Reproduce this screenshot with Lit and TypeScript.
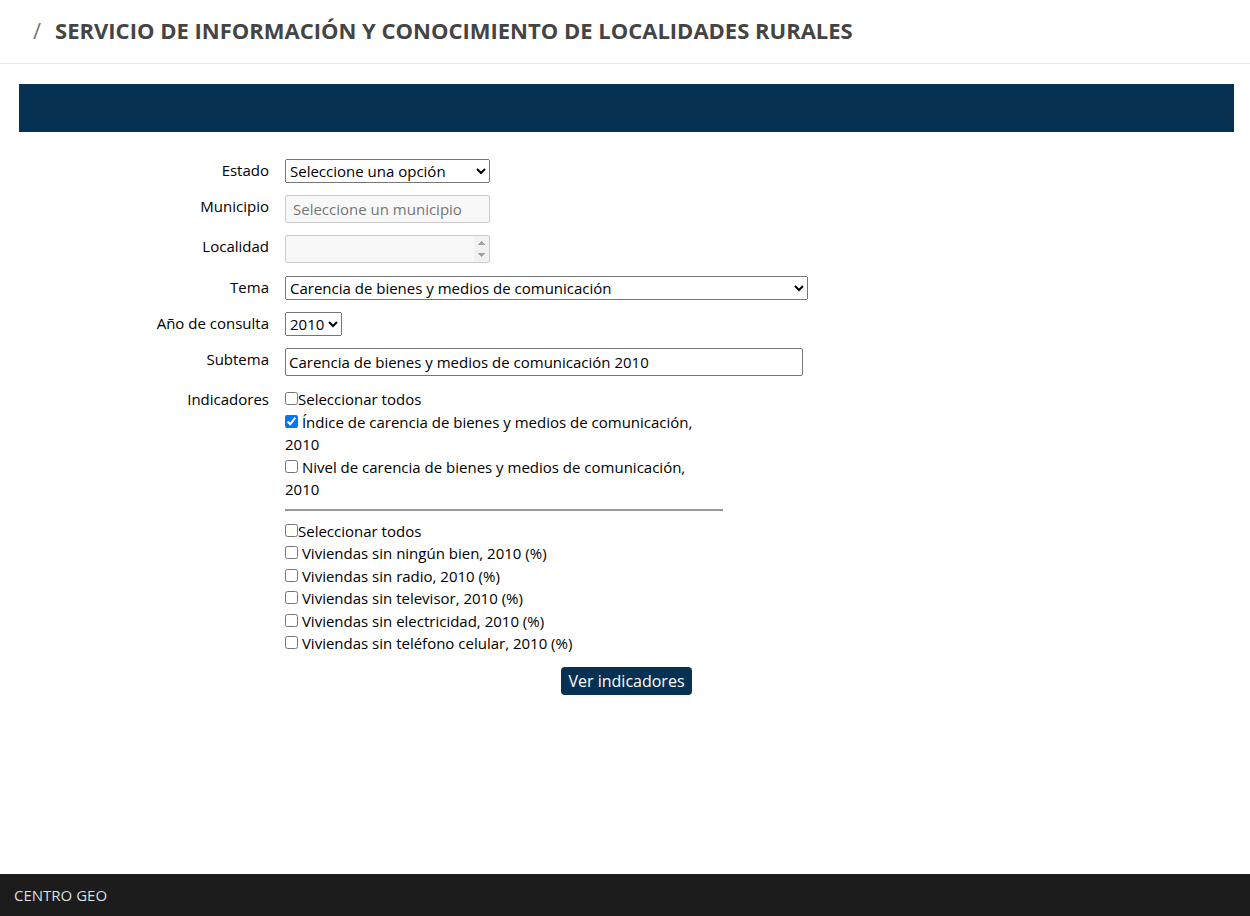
import { LitElement, html, css } from "lit";
import { customElement, state } from "lit/decorators.js";

interface Indicator {
  id: string;
  label: string;
  checked: boolean;
}

@customElement("app-root")
export class AppRoot extends LitElement {
  static styles = css`
    :host {
      display: flex;
      flex-direction: column;
      min-height: 100vh;
      background: #fff;
      color: #000;
      font-family: "Open Sans", sans-serif;
      font-size: 15px;
      line-height: 1.5;
    }
    *,
    *::before {
      box-sizing: border-box;
    }
    .header {
      display: flex;
      align-items: center;
      gap: 14px;
      padding: 15px 33px 18px;
      border-bottom: 1px solid #e7e7e7;
    }
    .slash,
    .title {
      margin: 0;
      font-size: 22px;
      line-height: 30px;
    }
    .slash {
      color: #777;
    }
    .title {
      color: #444;
      font-weight: 700;
    }
    .main {
      flex: 1;
      padding: 20px 16px 20px 19px;
    }
    .banner {
      height: 48px;
      background: #063152;
    }
    .form {
      display: grid;
      grid-template-columns: 250px minmax(0, 1fr);
      column-gap: 16px;
      row-gap: 12px;
      align-items: start;
      justify-items: start;
      margin-top: 27px;
    }
    .label {
      justify-self: end;
      line-height: 22px;
    }
    select,
    input,
    button {
      font: inherit;
      margin: 0;
    }
    .control {
      display: block;
      max-width: 100%;
      height: 28px;
    }
    .drop {
      height: 24px;
    }
    .small {
      width: 205px;
    }
    .place {
      padding: 1px 7px;
      border: 1px solid #ccc;
      border-radius: 2px;
      background: #f8f8f8;
    }
    .theme {
      width: 523px;
    }
    .subtheme {
      width: 518px;
      padding: 1px 3px;
      border: 1px solid #767676;
      border-radius: 2px;
    }
    .listbox {
      position: relative;
      max-width: 100%;
      padding-bottom: 1px;
    }
    .list {
      border: 1px solid #ccc;
      border-radius: 2px;
      background: #f8f8f8;
      opacity: 1;
      scrollbar-width: none;
    }
    .scroller {
      position: absolute;
      top: 1px;
      right: 1px;
      width: 15px;
      height: 26px;
      background: #f1f1f1;
      pointer-events: none;
    }
    .indicators {
      width: 438px;
      max-width: 100%;
    }
    .item {
      display: block;
    }
    .rule {
      height: 2px;
      margin: 8px 0 9px;
      border: 0;
      background: #999;
    }
    .actions {
      margin-top: 12px;
      text-align: center;
    }
    .submit {
      height: 28px;
      padding: 0 7px;
      border: 0;
      border-radius: 4px;
      background: #063152;
      color: #fff;
      font-size: 16px;
      line-height: 28px;
      vertical-align: top;
    }
    .footer {
      padding: 10px 14px;
      background: #1c1c1c;
      color: #ddd;
      line-height: 22px;
    }
  `;

  @state() private general: Indicator[] = [
    { id: "g1", label: "Índice de carencia de bienes y medios de comunicación, 2010", checked: true },
    { id: "g2", label: "Nivel de carencia de bienes y medios de comunicación, 2010", checked: false },
  ];

  @state() private dwellings: Indicator[] = [
    { id: "v1", label: "Viviendas sin ningún bien, 2010 (%)", checked: false },
    { id: "v2", label: "Viviendas sin radio, 2010 (%)", checked: false },
    { id: "v3", label: "Viviendas sin televisor, 2010 (%)", checked: false },
    { id: "v4", label: "Viviendas sin electricidad, 2010 (%)", checked: false },
    { id: "v5", label: "Viviendas sin teléfono celular, 2010 (%)", checked: false },
  ];

  private renderGroup(items: Indicator[], update: (next: Indicator[]) => void) {
    const all = items.every((i) => i.checked);
    return html`
      <label class="item"><input type="checkbox" .checked=${all}
          @change=${(e: Event) => {
            const checked = (e.target as HTMLInputElement).checked;
            update(items.map((i) => ({ ...i, checked })));
          }}>Seleccionar todos</label>
      ${items.map(
        (item) => html`<label class="item"><input type="checkbox" .checked=${item.checked}
            @change=${(e: Event) => {
              const checked = (e.target as HTMLInputElement).checked;
              update(items.map((i) => (i.id === item.id ? { ...i, checked } : i)));
            }}> ${item.label}</label>`
      )}
    `;
  }

  render() {
    return html`
      <header class="header">
        <span class="slash">/</span>
        <h1 class="title">SERVICIO DE INFORMACIÓN Y CONOCIMIENTO DE LOCALIDADES RURALES</h1>
      </header>
      <main class="main">
        <div class="banner"></div>
        <form @submit=${(e: Event) => e.preventDefault()}>
          <div class="form">
            <label class="label" for="estado">Estado</label>
            <select class="control drop small" id="estado">
              <option>Seleccione una opción</option>
            </select>
            <label class="label" for="municipio">Municipio</label>
            <input class="control small place" id="municipio" placeholder="Seleccione un municipio" disabled>
            <label class="label" for="localidad">Localidad</label>
            <div class="listbox">
              <select class="control small list" id="localidad" multiple disabled></select>
              <svg class="scroller" viewBox="0 0 15 26" aria-hidden="true" shape-rendering="crispEdges">
                <path d="M7 5h1v1h1v1h1v1h1v1H4V8h1V7h1V6h1z" fill="#a3a3a3" />
                <path d="M4 17h7v1h-1v1H9v1H8v1H7v-1H6v-1H5v-1H4z" fill="#a3a3a3" />
              </svg>
            </div>
            <label class="label" for="tema">Tema</label>
            <select class="control drop theme" id="tema">
              <option>Carencia de bienes y medios de comunicación</option>
            </select>
            <label class="label" for="anio">Año de consulta</label>
            <select class="control drop" id="anio">
              <option>2010</option>
            </select>
            <label class="label" for="subtema">Subtema</label>
            <input class="control subtheme" id="subtema" value="Carencia de bienes y medios de comunicación 2010">
            <span class="label" id="indicadores">Indicadores</span>
            <div class="indicators" role="group" aria-labelledby="indicadores">
              ${this.renderGroup(this.general, (n) => (this.general = n))}
              <hr class="rule">
              ${this.renderGroup(this.dwellings, (n) => (this.dwellings = n))}
            </div>
          </div>
          <div class="actions">
            <button class="submit" type="submit">Ver indicadores</button>
          </div>
        </form>
      </main>
      <footer class="footer">CENTRO GEO</footer>
    `;
  }
}
